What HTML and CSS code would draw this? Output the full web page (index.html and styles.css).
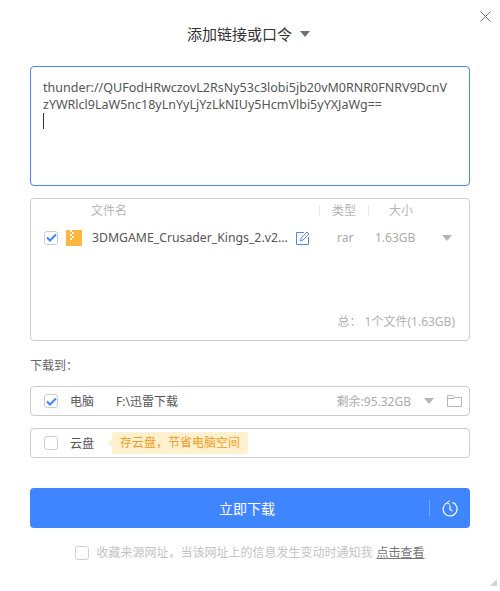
FILE: index.html
```html
<!DOCTYPE html>
<html lang="zh">
<head>
<meta charset="utf-8">
<title>添加链接或口令</title>
<link rel="stylesheet" href="styles.css">
</head>
<body>
<main class="dialog">
  <button class="close" aria-label="关闭">
    <svg width="11" height="11" viewBox="0 0 11 11"><path d="M.5.5l10 10M10.500.5l-10 10" stroke="#6b7078" fill="none"/></svg>
  </button>
  <header class="title"><span>添加链接或口令</span><i class="tri tri-title"></i></header>

  <div class="link-box">
    <div class="link-text">thunder://QUFodHRwczovL2RsNy53c3lobi5jb20vM0RNR0FNRV9DcnVzYWRlcl9LaW5nc18yLnYyLjYzLkNIUy5HcmVlbi5yYXJaWg==</div>
    <span class="caret"></span>
  </div>

  <section class="file-box">
    <div class="file-head">
      <span class="h-name">文件名</span>
      <span class="sep"></span>
      <span class="h-type">类型</span>
      <span class="sep"></span>
      <span class="h-size">大小</span>
    </div>
    <div class="file-row">
      <span class="check on file-check"><svg width="11" height="9" viewBox="0 0 11 9"><path d="M1 4.500l3 3 6-6" stroke="#3f85ff" stroke-width="2" fill="none"/></svg></span>
      <span class="rar"><svg width="16" height="16" viewBox="0 0 16 16"><rect width="16" height="16" fill="#fdb740"/><path d="M4 0h2v2H4zM6 2h2v2H6zM4 4h2v2H4zM6 6h2v2H6zM4 8h2v2H4z" fill="#fff" opacity=".85"/></svg></span>
      <span class="file-name">3DMGAME_Crusader_Kings_2.v2...</span>
      <svg class="edit" width="14" height="14" viewBox="0 0 14 14"><path d="M8 1.500H.5v12h12V6" stroke="#4c87f6" fill="none"/><path d="M4.500 10l.7-3L11 1l2 2-6 6z" stroke="#4c87f6" fill="none"/></svg>
      <span class="file-type">rar</span>
      <span class="file-size">1.63GB</span>
      <i class="tri tri-gray file-tri"></i>
    </div>
    <div class="file-total">总： 1个文件(1.63GB)</div>
  </section>

  <div class="save-label">下载到：</div>

  <div class="dest">
    <span class="check on"><svg width="11" height="9" viewBox="0 0 11 9"><path d="M1 4.500l3 3 6-6" stroke="#3f85ff" stroke-width="2" fill="none"/></svg></span>
    <span class="dest-name">电脑</span>
    <span class="dest-path">F:\迅雷下载</span>
    <span class="free">剩余:95.32GB</span>
    <i class="tri tri-gray dest-tri"></i>
    <svg class="folder" width="15" height="12" viewBox="0 0 15 12"><path d="M.5 11.500V.5h5l1.500 2h7.500v9zM.5 3.500h6.500" stroke="#b5b5b5" fill="none"/></svg>
  </div>

  <div class="dest dest-cloud">
    <span class="check"></span>
    <span class="dest-name">云盘</span>
    <span class="tip">存云盘，节省电脑空间</span>
  </div>

  <div class="download">
    <span class="download-label">立即下载</span>
    <span class="download-sep"></span>
    <span class="clock"><svg width="16" height="17" viewBox="0 0 16 17"><path d="M5 2.700A7 7 0 1 0 10.500 2.400" stroke="#fff" stroke-width="1.200" fill="none"/><path d="M8 .5L5 2.700l3 1.800" stroke="#fff" fill="none"/><path d="M8 5.500v4l2.500 1.500" stroke="#fff" stroke-width="1.200" fill="none"/></svg></span>
  </div>

  <footer class="foot">
    <span class="check check-foot"></span>
    <span class="foot-text">收藏来源网址，当该网址上的信息发生变动时通知我</span>
    <a class="foot-link">点击查看</a>
  </footer>

  <svg class="grip" width="8" height="8" viewBox="0 0 9 9"><path d="M9 1v8H1z" fill="#d4d4d4"/></svg>
</main>
</body>
</html>
```

FILE: styles.css
```css
* { box-sizing: border-box; }
html, body { margin: 0; height: 100%; background: #fff; }
body {
  font-family: "Noto Sans", "Noto Sans CJK SC", sans-serif;
  font-size: 12px;
  color: #555;
}
.dialog {
  position: relative;
  width: 500px;
  height: 591px;
  padding: 0 30px;
  display: flex;
  flex-direction: column;
}
.close {
  position: absolute;
  top: 11px;
  right: 9px;
  width: 11px;
  height: 11px;
  padding: 0;
  border: 0;
  background: none;
  display: flex;
}
.title {
  height: 66px;
  padding: 24px 3px 0 0;
  display: flex;
  justify-content: center;
  align-items: flex-start;
  gap: 8px;
  font-size: 15px;
  line-height: 20px;
  color: #333;
}
.tri {
  display: block;
  width: 0;
  height: 0;
  border-style: solid;
  border-color: transparent;
  border-bottom-width: 0;
}
.tri-title {
  margin-top: 7px;
  border-width: 6px 5px 0;
  border-top-color: #6c7079;
}
.tri-gray {
  border-width: 6px 5.500px 0;
  border-top-color: #b5b5b5;
}
.link-box {
  height: 120px;
  border: 1px solid #4585f5;
  border-radius: 4px;
  padding: 12px 20px 0 12px;
  font-size: 12.500px;
  line-height: 17px;
  color: #555;
}
.link-text { word-break: break-all; }
.caret {
  display: block;
  width: 1px;
  height: 16px;
  background: #333;
}
.file-box {
  height: 143px;
  margin-top: 12px;
  border: 1px solid #ccc;
  border-radius: 4px;
  position: relative;
  display: flex;
  flex-direction: column;
}
.file-head {
  height: 22px;
  display: flex;
  align-items: center;
  color: #b5b5b5;
}
.h-name { margin-left: 60px; width: 228px; }
.sep { width: 1px; height: 10px; background: #e6e6e6; }
.h-type { width: 48px; text-align: center; }
.h-size { width: 64px; text-align: center; }
.file-row {
  height: 33px;
  display: flex;
  align-items: center;
  padding-left: 13px;
}
.check {
  flex: none;
  width: 14px;
  height: 14px;
  border: 1px solid #ccc;
  border-radius: 3px;
  display: flex;
  align-items: center;
  justify-content: center;
}
.rar { display: flex; margin-left: 8px; }
.file-name { margin-left: 10px; width: 204px; white-space: nowrap; color: #555; font-size: 12.250px; }
.edit { flex: none; }
.file-type { margin-left: 27px; width: 38px; color: #aaa; }
.file-size { width: 67px; color: #aaa; }
.file-total {
  margin-top: auto;
  padding: 0 14px 10px 0;
  text-align: right;
  color: #b0b0b0;
  line-height: 17px;
}
.save-label {
  margin-top: 16px;
  height: 29px;
  line-height: 17px;
  color: #666;
}
.dest {
  height: 30px;
  border: 1px solid #ccc;
  border-radius: 4px;
  padding: 0 14px 0 13px;
  display: flex;
  align-items: center;
}
.dest-cloud { margin-top: 12px; }
.dest-name { margin-left: 12px; width: 46px; }
.dest-path { color: #555; }
.free { margin-left: auto; color: #aaa; }
.dest-tri { margin-left: 13px; }
.folder { flex: none; margin-left: 13px; margin-right: -7px; }
.tip {
  position: relative;
  margin-left: -4px;
  height: 22px;
  padding: 0 8px;
  line-height: 22px;
  background: #fff1cf;
  border-radius: 2px;
  color: #f59c1d;
}
.tip::before {
  content: "";
  position: absolute;
  left: -4px;
  top: 7px;
  border-style: solid;
  border-width: 4px 4px 4px 0;
  border-color: transparent #fff1cf transparent transparent;
}
.download {
  position: relative;
  height: 40px;
  margin-top: 30px;
  padding-right: 6px;
  background: #3f85ff;
  border-radius: 4px;
  display: flex;
  align-items: center;
  justify-content: center;
  color: #fff;
  font-size: 14px;
}
.download-sep {
  position: absolute;
  right: 40px;
  top: 12px;
  width: 1px;
  height: 16px;
  background: #7aaaff;
}
.clock {
  position: absolute;
  right: 12px;
  top: 12px;
  display: flex;
}
.foot {
  margin-top: 16px;
  display: flex;
  align-items: center;
  justify-content: center;
  gap: 7px;
  color: #c4c4c4;
  line-height: 17px;
}
.check-foot { border-color: #d0d0d0; }
.foot-link { margin-left: -3px; color: #777; text-decoration: underline; }
.grip { position: absolute; right: 3px; bottom: 5px; }
```
